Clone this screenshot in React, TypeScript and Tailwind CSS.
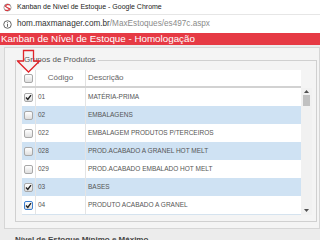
import React from "react";

type Row = { code: string; desc: string; checked?: boolean; focus?: boolean };

const rows: Row[] = [
  { code: "01", desc: "MATÉRIA-PRIMA", checked: true },
  { code: "02", desc: "EMBALAGENS" },
  { code: "022", desc: "EMBALAGEM PRODUTOS P/TERCEIROS" },
  { code: "028", desc: "PROD.ACABADO A GRANEL HOT MELT" },
  { code: "029", desc: "PROD.ACABADO EMBALADO HOT MELT" },
  { code: "03", desc: "BASES", checked: true },
  { code: "04", desc: "PRODUTO ACABADO A GRANEL", checked: true, focus: true },
];

const Check = ({ checked, focus }: { checked?: boolean; focus?: boolean }) => (
  <span
    className={`flex h-[9px] w-[9px] items-center justify-center rounded-[2px] border bg-gradient-to-b from-white to-[#dedede] ${
      focus ? "border-[#3d7fd0]" : "border-[#a8a8a8]"
    }`}
  >
    {checked && (
      <svg width="7" height="7" viewBox="0 0 7 7">
        <path d="M1 3.6 L2.8 5.4 L6 1.2" stroke="#222" strokeWidth="1.4" fill="none" />
      </svg>
    )}
  </span>
);

export default function App() {
  return (
    <div className="relative h-[240px] w-[320px] overflow-hidden bg-white font-['Liberation_Sans',Arial,sans-serif]">
      {/* window title */}
      <div className="flex h-[15px] items-center gap-[5px] border-b border-[#e6e6e6] pl-[3px]">
        <svg width="9" height="9" viewBox="0 0 10 10">
          <circle cx="5" cy="5" r="4" stroke="#9a9a9a" strokeWidth="1" fill="none" />
          <path d="M7.5 2.5 A3.2 3.2 0 0 0 2.5 3.5 Q4 5 7.5 6.5 A3.2 3.2 0 0 1 2.5 7.5" stroke="#d9343c" strokeWidth="1.3" fill="none" />
        </svg>
        <span className="text-[7px] text-[#222]">Kanban de Nível de Estoque - Google Chrome</span>
      </div>

      {/* address bar */}
      <div className="flex h-[18px] items-center gap-[5px] pl-[3px]">
        <svg width="9" height="9" viewBox="0 0 10 10">
          <circle cx="5" cy="5" r="4.2" stroke="#555" strokeWidth="1" fill="none" />
          <rect x="4.5" y="4.3" width="1" height="3.3" fill="#555" />
          <rect x="4.5" y="2.5" width="1" height="1" fill="#555" />
        </svg>
        <span className="text-[8.2px] text-[#333]">
          hom.maxmanager.com.br<span className="text-[#8a8a8a]">/MaxEstoques/es497c.aspx</span>
        </span>
      </div>

      {/* page header */}
      <div className="h-[12px] bg-[#e63a44] pl-[1px] text-[9.8px] leading-[12px] text-white">
        Kanban de Nível de Estoque - Homologação
      </div>

      <div className="h-[195px] bg-[#ececec] pl-[4px] pt-[2px]">
        <div className="border border-[#d6d6d6] bg-[#f4f4f4] pb-[6px] pl-[10px] pr-[2px] pt-[6px]">
          <fieldset className="border border-[#d0d0d0] pb-[6px] pl-[6px] pr-[3px] pt-[4px]">
            <legend className="px-[2px] text-[8px] leading-[12px] text-[#555]">Grupos de Produtos</legend>

            {/* header */}
            <div className="flex">
              <div className="flex h-[18px] w-[279px] border-b-2 border-[#d2d2d2] bg-white text-[8px] text-[#666]">
                <div className="flex w-[14px] items-center justify-center border-r border-[#e2e2e2]">
                  <Check />
                </div>
                <div className="flex w-[50px] items-center justify-center border-r border-[#e2e2e2]">Código</div>
                <div className="flex flex-1 items-center pl-[2px]">Descrição</div>
              </div>
            </div>

            {/* body */}
            <div className="flex h-[127px]">
              <div className="w-[279px] border-b border-[#d5e3ef] text-[6.5px] text-[#555]">
                {rows.map((r, i) => (
                  <div key={r.code} className={`flex h-[18px] ${i % 2 ? "bg-[#cfe2f3]" : "bg-white"}`}>
                    <div className="flex w-[14px] items-center justify-center border-r border-[#e4e4e4]">
                      <Check checked={r.checked} focus={r.focus} />
                    </div>
                    <div className="flex w-[50px] items-center border-r border-[#e4e4e4] pl-[2px]">{r.code}</div>
                    <div className="flex flex-1 items-center pl-[2px]">{r.desc}</div>
                  </div>
                ))}
              </div>
              <div className="flex w-[11px] flex-col items-center bg-[#f1f1f1] pb-[3px] pt-[2px]">
                <svg width="5" height="3" viewBox="0 0 5 3">
                  <path d="M2.5 0 L5 3 L0 3 Z" fill="#505050" />
                </svg>
                <div className="mt-[2px] h-[11px] w-[7px] bg-[#c1c1c1]" />
                <div className="flex-1" />
                <svg width="5" height="3" viewBox="0 0 5 3">
                  <path d="M0 0 L5 0 L2.5 3 Z" fill="#505050" />
                </svg>
              </div>
            </div>
          </fieldset>
        </div>
        <div className="pl-[11px] pt-[5px] text-[8px] font-bold text-[#444]">Nível de Estoque Mínimo e Máximo</div>
      </div>

      {/* red arrow callout */}
      <svg className="absolute left-[17px] top-[49px]" width="24" height="24" viewBox="0 0 24 24">
        <path d="M6.5 1.5 H16.5 V12 H22.5 L11.5 23 L0.5 12 H6.5 Z" stroke="#e0252b" strokeWidth="1.3" fill="none" />
      </svg>
    </div>
  );
}
